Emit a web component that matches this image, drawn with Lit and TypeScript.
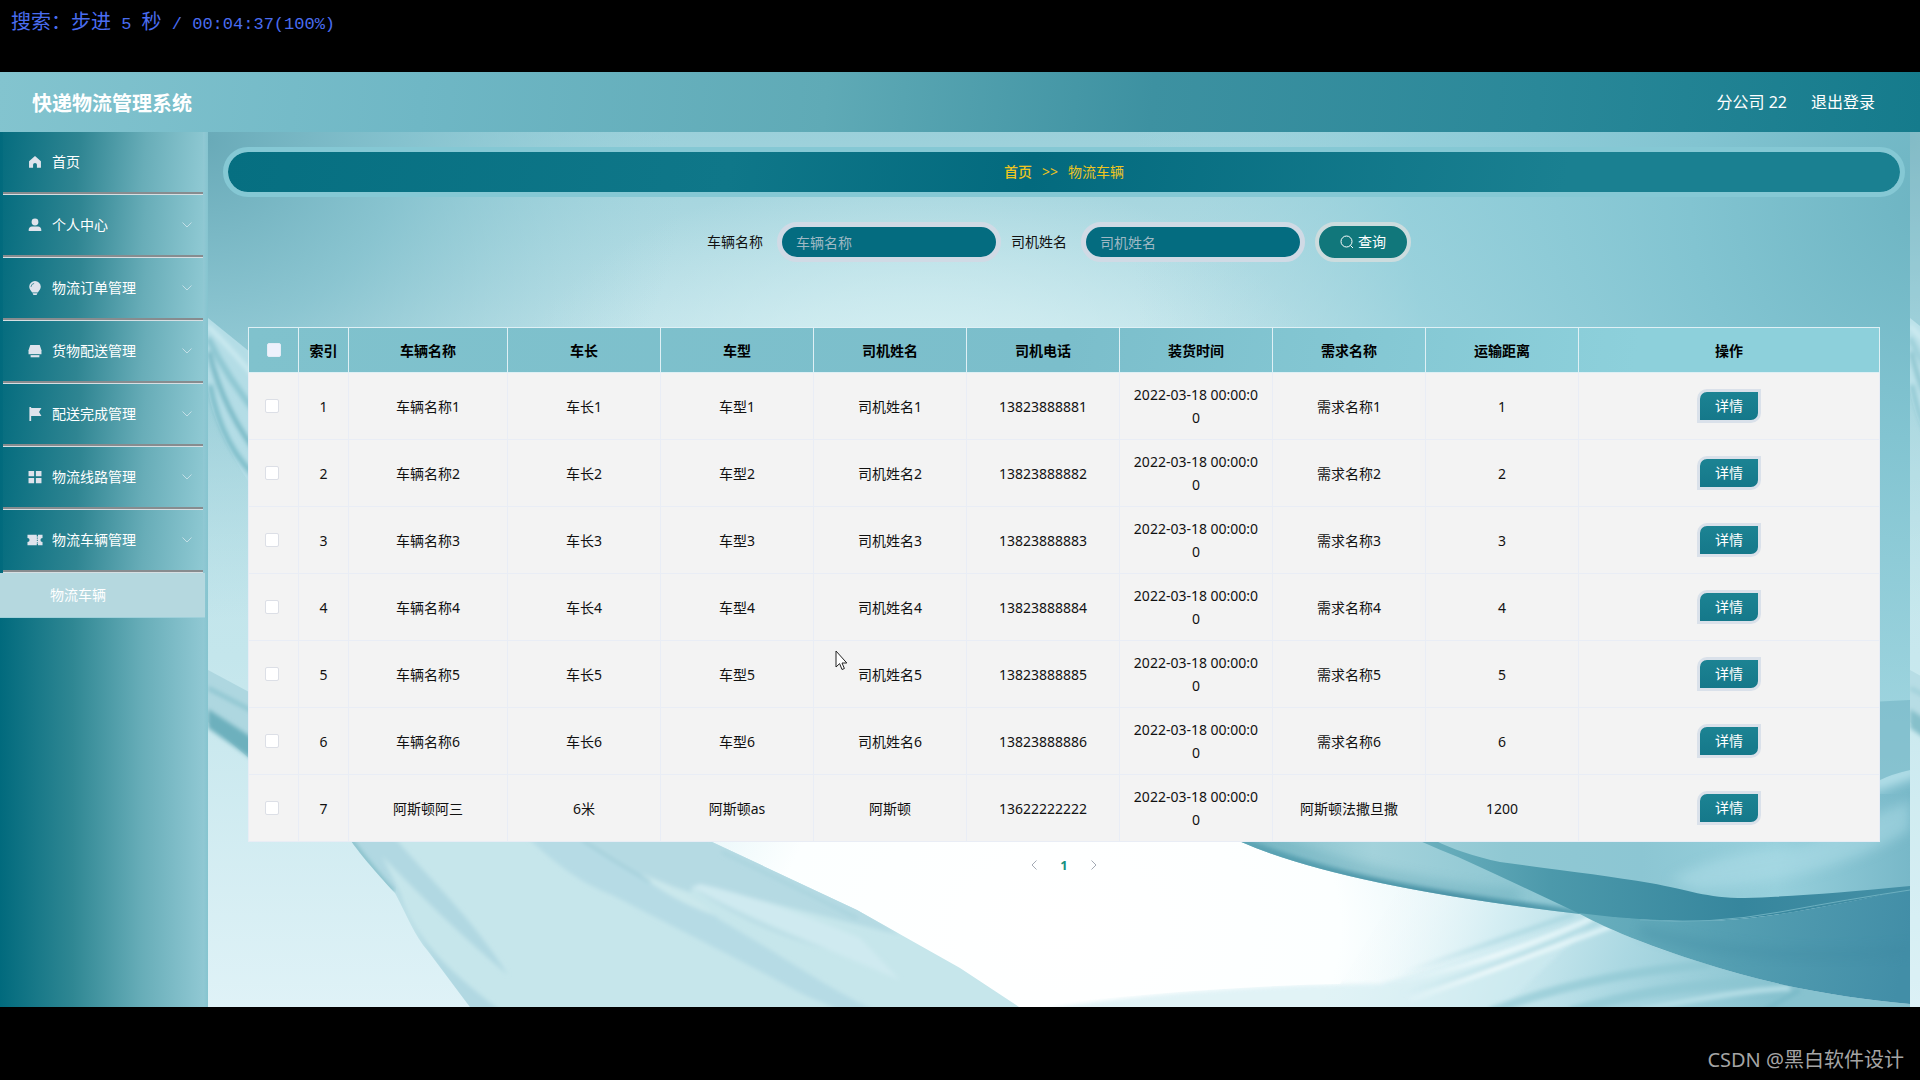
import { LitElement, html, css, svg } from "lit";
import { customElement, property, state } from "lit/decorators.js";

const icons: Record<string, unknown> = {
  home: svg`<path d="M8 1.2 1.2 7v7.6h4.600v-3.400a2.200 2.200 0 0 1 4.400 0v3.400h4.600V7z"/>`,
  user: svg`<circle cx="8" cy="4.600" r="3.900"/><path d="M.8 14.800v-1.400c0-2.400 1.500-3.800 3.800-3.800h6.800c2.300 0 3.800 1.400 3.800 3.800v1.400z"/>`,
  bulb: svg`<path d="M8 0a6.600 6.600 0 0 0-6.600 6.500c0 2.600 1.800 4.300 3.300 6.500h6.600c1.500-2.200 3.300-3.900 3.300-6.500A6.600 6.600 0 0 0 8 0z"/><path d="M5.200 14h5.600l-1 2H6.200z"/><path d="M3.400 6.800A4.400 4.400 0 0 1 7 2.700" fill="none" stroke="#3a8796" stroke-width="1"/>`,
  printer: svg`<path d="M2.600 1h10.800l2 6v4.800H.6V7z"/><path d="M3 12.600h10v2.600H3z"/><path d="M3.400 12.200h9.200" stroke="#2d7f8d" stroke-width=".8"/>`,
  flag: svg`<path d="M1.600 0h2v1.200h11.800l-2.800 4.600 2.800 4.600H3.600v5.600h-2z"/>`,
  grid: svg`<path d="M.6 1h6.400v6H.6zM9 1h6.400v6H9zM.6 9h6.400v6H.6zM9 9h6.400v6H9z"/>`,
  ticket: svg`<path d="M-.6 2h10.600v2h1.400V2h5.200v3.600a2.400 2.400 0 0 0 0 4.800V14h-5.200v-2H10v2H-.6v-3.600a2.400 2.400 0 0 0 0-4.800z"/><path d="M10.700 5v6" stroke="#3a8796" stroke-width="1.200" stroke-dasharray="1.600 1"/>`,
};

@customElement("silk-backdrop")
class SilkBackdrop extends LitElement {
  static styles = css`
    :host { display: block; }
    .art { display: block; width: 100%; height: 100%; }
  `;
  render() {
    return html`<svg class="art" viewBox="208 132 1712 875" preserveAspectRatio="none" aria-hidden="true">
      <defs>
        <linearGradient id="base" x1="0" y1="0" x2="0" y2="1">
          <stop offset="0" stop-color="#9bd0da"/><stop offset=".22" stop-color="#bde1e8"/>
          <stop offset=".6" stop-color="#c4e6ec"/><stop offset="1" stop-color="#dff2f7"/>
        </linearGradient>
        <radialGradient id="glow" gradientUnits="userSpaceOnUse" cx="1060" cy="930" r="560" gradientTransform="translate(0 230) scale(1 .75)">
          <stop offset="0" stop-color="#fff"/><stop offset=".5" stop-color="#fcffff"/><stop offset="1" stop-color="#f0fbfd" stop-opacity="0"/>
        </radialGradient>
        <radialGradient id="mid" gradientUnits="userSpaceOnUse" cx="920" cy="420" r="420" gradientTransform="translate(0 168) scale(1 .6)">
          <stop offset="0" stop-color="#dcf3f5"/><stop offset=".5" stop-color="#d6f0f3" stop-opacity=".6"/><stop offset="1" stop-color="#d0edf1" stop-opacity="0"/>
        </radialGradient>
        <radialGradient id="tl" gradientUnits="userSpaceOnUse" cx="208" cy="140" r="480">
          <stop offset="0" stop-color="#69aab8"/><stop offset=".4" stop-color="#7dbdca" stop-opacity=".75"/><stop offset="1" stop-color="#9ad0da" stop-opacity="0"/>
        </radialGradient>
        <radialGradient id="tr" gradientUnits="userSpaceOnUse" cx="1930" cy="200" r="800">
          <stop offset="0" stop-color="#6db4c2"/><stop offset=".3" stop-color="#82c4d1"/><stop offset=".65" stop-color="#8fcdd9" stop-opacity=".75"/><stop offset="1" stop-color="#a8d8e1" stop-opacity="0"/>
        </radialGradient>
        <linearGradient id="wave" gradientUnits="userSpaceOnUse" x1="1239" y1="0" x2="1910" y2="0">
          <stop offset="0" stop-color="#7fbdc9"/><stop offset=".2" stop-color="#a3d2db"/><stop offset=".4" stop-color="#90c8d3"/><stop offset=".6" stop-color="#8cc6d3"/><stop offset=".8" stop-color="#97d0dc"/><stop offset="1" stop-color="#78b8c8"/>
        </linearGradient>
        <linearGradient id="fold" gradientUnits="userSpaceOnUse" x1="1430" y1="0" x2="1910" y2="0">
          <stop offset="0" stop-color="#6aafbd"/><stop offset=".25" stop-color="#4c99ab"/><stop offset=".65" stop-color="#36869d"/><stop offset="1" stop-color="#4590a6"/>
        </linearGradient>
        <linearGradient id="deep" gradientUnits="userSpaceOnUse" x1="1580" y1="914" x2="1900" y2="980">
          <stop offset="0" stop-color="#69afbe"/><stop offset=".45" stop-color="#559fb2"/><stop offset="1" stop-color="#428ea7"/>
        </linearGradient>
        <linearGradient id="veil" gradientUnits="userSpaceOnUse" x1="1340" y1="900" x2="1760" y2="1040">
          <stop offset="0" stop-color="#fff" stop-opacity="0"/><stop offset=".35" stop-color="#d5eef3"/><stop offset=".65" stop-color="#abd8e2"/><stop offset="1" stop-color="#87c2cf"/>
        </linearGradient>
        <linearGradient id="lip" gradientUnits="userSpaceOnUse" x1="1239" y1="0" x2="1600" y2="0">
          <stop offset="0" stop-color="#5da5b5"/><stop offset=".6" stop-color="#468fa3"/><stop offset="1" stop-color="#5ba4b5"/>
        </linearGradient>
        <linearGradient id="shade" gradientUnits="userSpaceOnUse" x1="1400" y1="0" x2="1600" y2="0">
          <stop offset="0" stop-color="#b0dae3" stop-opacity="0"/><stop offset=".5" stop-color="#b0dae3" stop-opacity=".8"/><stop offset="1" stop-color="#a5d5df"/>
        </linearGradient>
        <linearGradient id="shine" gradientUnits="userSpaceOnUse" x1="1390" y1="0" x2="1600" y2="0">
          <stop offset="0" stop-color="#f4fcfd" stop-opacity="0"/><stop offset=".5" stop-color="#f4fcfd"/><stop offset="1" stop-color="#e4f6f9"/>
        </linearGradient>
        <filter id="soft" x="-20%" y="-50%" width="140%" height="200%"><feGaussianBlur stdDeviation="6"/></filter>
        <filter id="edge" x="-5%" y="-20%" width="110%" height="140%"><feGaussianBlur stdDeviation="2"/></filter>
        <clipPath id="cloth"><path d="M351 841C366 862 385 882 395 893C408 917 414 935 428 951L470 1007H1019L960 968 857 910 710 841z"/></clipPath>
        <clipPath id="swell"><path d="M1239 841 1880 780Q1892 774 1910 770V890L1580 914Q1340 886 1239 841z"/></clipPath>
        <clipPath id="floor"><path d="M1020 1007Q1210 986 1340 984L1400 887 1580 914C1620 936 1680 957 1740 974S1860 999 1910 1004V1007z"/></clipPath>
        <clipPath id="frame"><path d="M208 132h1702v875H208z"/></clipPath>
      </defs>
      <g id="scene" clip-path="url(#frame)">
        <path fill="url(#base)" d="M208 132h1702v875H208z"/>
        <path fill="url(#mid)" d="M400 132h1100v600H400z"/>
        <path fill="url(#tl)" d="M208 132h600v500H208z"/>
        <path fill="url(#tr)" d="M1100 132h810v875h-810z"/>
        <path fill="url(#glow)" d="M400 600h1510v407H400z"/>

        <path fill="#b4dde6" d="M208 318 250 352 320 420V560L250 484Q214 430 208 390z"/>
        <g filter="url(#edge)" fill="none">
          <path stroke="#6fb3c0" stroke-width="4" d="M209 352Q224 414 264 462"/>
          <path stroke="#8cc6d1" stroke-width="6" d="M208 338Q228 380 262 420"/>
          <path stroke="#7bbcc8" stroke-width="5" d="M210 385Q222 450 262 482"/>
          <path stroke="#cdebf1" stroke-width="4" d="M208 326Q232 350 262 386"/>
        </g>
        <path fill="#aed7e0" d="M208 670 260 698V768L208 722z"/>
        <path fill="#6db0bd" filter="url(#edge)" d="M208 709 262 744V766L208 728z"/>
        <path fill="none" stroke="#8dc5d0" stroke-width="4" filter="url(#edge)" d="M208 688 262 716"/>

        <g clip-path="url(#cloth)">
          <path fill="#c6e6eb" d="M340 830h700v180H340z"/>
          <g filter="url(#edge)">
            <path fill="#b6dbe5" d="M528 838C560 868 585 885 612 895C690 935 740 960 780 982S820 1000 838 1010H875C830 990 790 960 720 920 690 890 610 855 580 838z"/>
            <path fill="#b5dae3" d="M580 838C615 862 650 880 690 892L700 886 760 900 900 935 850 900 710 838z"/>
            <path fill="#cfeaf0" d="M700 884Q770 900 860 938L900 980Q780 930 690 888z"/>
            <path fill="#cbe8ec" d="M640 874Q690 890 716 916 670 900 640 874z"/>
            <path fill="#bbdee6" d="M690 886Q760 925 830 950 750 930 690 886z"/>
            <path fill="none" stroke="#98c9d5" stroke-width="2" d="M582 840Q615 862 650 882"/>
            <path fill="#b1d8e2" d="M351 838H395C430 880 470 915 508 975 460 935 420 895 382 856L400 893C410 930 440 965 500 1010H465C430 955 412 930 395 893z"/>
          </g>
          <path fill="none" stroke="#83bdc9" stroke-width="5" filter="url(#edge)" d="M349 838Q372 868 393 892"/>
          <path fill="none" stroke="#a8d3dd" stroke-width="3" filter="url(#edge)" d="M722 852Q790 884 857 918"/>
        </g>

        <g clip-path="url(#floor)">
          <path fill="url(#veil)" d="M1000 880h910v130h-910z"/>
          <path fill="#cfebf1" opacity=".6" filter="url(#edge)" d="M1040 1010Q1200 984 1380 984 1500 950 1600 915L1500 1010z"/>
          <g filter="url(#edge)" fill="none">
            <path stroke="url(#shade)" stroke-width="5" d="M1400 974Q1500 940 1574 914"/>
            <path stroke="url(#shine)" stroke-width="4" d="M1390 984Q1500 960 1592 918"/>
            <path stroke="url(#shade)" stroke-width="3" d="M1400 994Q1500 968 1598 922"/>
            <path stroke="url(#shine)" stroke-width="4" d="M1410 1000Q1530 956 1612 926"/>
            <path stroke="#8ac5d1" stroke-width="9" d="M1490 1012Q1580 976 1710 964" opacity=".6"/>
            <path stroke="#8ac5d1" stroke-width="10" d="M1570 1012Q1660 984 1760 982" opacity=".6"/>
            <path stroke="#b7dfe7" stroke-width="5" d="M1640 1010Q1740 990 1790 988"/>
            <path stroke="#79b9c7" stroke-width="4" d="M1765 1010 1800 990"/>
          </g>
        </g>

        <path fill="#7dbccb" opacity=".8" d="M1870 702l40-2v90h-40z"/>
        <g clip-path="url(#swell)">
          <path fill="url(#wave)" d="M1230 760h680v160h-680z"/>
          <path fill="#b0dee8" opacity=".5" filter="url(#soft)" d="M1670 880Q1720 850 1800 846L1910 800V830Q1830 880 1700 890z"/>
          <path fill="none" stroke="#b9e3ec" stroke-width="14" filter="url(#soft)" d="M1870 785 1920 768"/>
          <path fill="none" stroke="url(#lip)" stroke-width="16" filter="url(#edge)" d="M1225 838C1340 888 1460 902 1600 920"/>
          <path fill="none" stroke="#64a9b8" stroke-width="10" opacity=".5" filter="url(#soft)" d="M1230 826C1340 870 1440 890 1520 896"/>
        </g>
        <path fill="url(#fold)" d="M1420 841H1436C1450 848 1475 857 1500 862C1560 870 1610 876 1650 883S1705 898 1745 898Q1810 896 1910 886V891C1850 900 1770 921 1700 921Q1630 921 1580 914 1500 876 1458 857 1440 850 1420 841z"/>
        <path fill="url(#deep)" d="M1578 913Q1640 921 1700 921C1770 921 1850 900 1910 890V1004C1860 999 1800 991 1740 974S1620 936 1578 913z"/>
        <path fill="none" stroke="#6db0c0" stroke-width="1" d="M1640 920Q1710 925 1780 912T1910 890"/>
        <path fill="none" stroke="#3c869f" stroke-width="10" opacity=".3" filter="url(#soft)" d="M1640 930Q1750 965 1910 950"/>
      </g>
      <use href="#scene" x="1702"/>
      <path fill="#d5f0f5" opacity=".25" d="M1910 132h10v875h-10z"/>
    </svg>`;
  }
}

@customElement("side-menu")
class SideMenu extends LitElement {
  static styles = css`
    :host {
      display: block;
      background: linear-gradient(90deg, #016a7d 0%, #2f8793 35%, #67adb8 68%, #90c8d3 98%, #85c4cf 100%);
    }
    .list { list-style: none; margin: 0; padding: 0; }
    .row { margin: 0 5px 0 3px; }
    .item {
      display: flex; align-items: center; width: 100%; height: 63px; box-sizing: border-box;
      padding: 0 11px 0 24px; border: 0; border-bottom: 3px groove #d6dfe3;
      background: linear-gradient(95deg, #066d7f 0%, #2f8592 38%, #68adb8 70%, #8fc9d3 100%);
      color: #fff; font: inherit; font-size: 14px; text-align: left; text-decoration: none; cursor: pointer;
    }
    .icon { width: 16px; height: 14px; fill: #dfe3ec; margin-right: 9px; overflow: visible; }
    .name { flex: 1; }
    .chev { width: 10px; height: 6px; fill: none; stroke: #c3dfe6; stroke-width: 1; overflow: visible; }
    .sub {
      display: flex; align-items: center; height: 45px; margin-right: 3px; padding-left: 50px;
      background: #b5d8df; border-bottom: 1px solid #9fd0da; color: #fff; font-size: 14px; text-decoration: none;
      box-sizing: border-box;
    }
  `;
  private entries = [
    ["home", "首页"], ["user", "个人中心"], ["bulb", "物流订单管理"], ["printer", "货物配送管理"],
    ["flag", "配送完成管理"], ["grid", "物流线路管理"], ["ticket", "物流车辆管理"],
  ];
  render() {
    return html`<nav><ul class="list">
      ${this.entries.map(([icon, name], i) => {
        const body = html`<svg class="icon" viewBox="0 0 16 16" aria-hidden="true">${icons[icon]}</svg><span class="name">${name}</span>`;
        return html`<li class="row">${i === 0
          ? html`<a class="item" href="#home">${body}</a>`
          : html`<button class="item" type="button">${body}<svg class="chev" viewBox="0 0 10 6" aria-hidden="true"><path d="M.5.5 5 5l4.500-4.500"/></svg></button>`}</li>`;
      })}
      <li><a class="sub" href="#vehicles">物流车辆</a></li>
    </ul></nav>`;
  }
}

interface Vehicle { name: string; length: string; type: string; driver: string; phone: string; need: string; distance: string; }

@customElement("vehicle-table")
class VehicleTable extends LitElement {
  @property({ attribute: false }) rows: Vehicle[] = [];
  static styles = css`
    :host { display: block; }
    .table { width: 100%; table-layout: fixed; border-collapse: collapse; font-size: 14px; line-height: 23px; color: #111; }
    .c-check { width: 50px; } .c-index { width: 50px; } .c-name { width: 159px; } .c-text { width: 153px; } .c-last { width: auto; }
    .head { background: linear-gradient(100deg, #80c2cd 0%, #7bbecb 50%, #8dd0db 85%); }
    .th { height: 45px; box-sizing: border-box; padding: 0; border: 1px solid #dff0f5; color: #000; font-weight: 700; text-align: center; }
    .td { height: 67px; box-sizing: border-box; padding: 0 12px; border: 1px solid #e9edf5; text-align: center; word-break: break-all; }
    .row { background: #f3f3f3; }
    .pick { padding: 0 3px 0 0; }
    .box { appearance: none; box-sizing: border-box; display: block; width: 14px; height: 14px; margin: 0 auto; border: 1px solid #dcdfe6; border-radius: 2px; background: #fff; }
    .th .box { background: #eef1fc; border-color: #e4ecf6; }
    .box:checked { background: #1a8192; }
    .more {
      width: 64px; height: 34px; padding: 0; border: 3px solid #dae1ea; border-radius: 10px 0 10px 0;
      background: linear-gradient(#1c8393, #15788a); color: #fff; font: inherit; font-size: 14px; line-height: 20px; cursor: pointer;
      display: block; margin: 0 auto;
    }
  `;
  render() {
    const heads = ["索引", "车辆名称", "车长", "车型", "司机姓名", "司机电话", "装货时间", "需求名称", "运输距离", "操作"];
    return html`<table class="table">
      <colgroup>
        <col class="c-check"><col class="c-index"><col class="c-name">
        ${[0, 1, 2, 3, 4, 5, 6].map(() => html`<col class="c-text">`)}<col class="c-last">
      </colgroup>
      <thead><tr class="head">
        <th class="th"><input class="box" type="checkbox" aria-label="全选"></th>
        ${heads.map((h) => html`<th class="th" scope="col">${h}</th>`)}
      </tr></thead>
      <tbody>${this.rows.map((r, i) => html`<tr class="row">
        <td class="td pick"><input class="box" type="checkbox" aria-label=${r.name}></td>
        <td class="td">${i + 1}</td><td class="td">${r.name}</td><td class="td">${r.length}</td>
        <td class="td">${r.type}</td><td class="td">${r.driver}</td><td class="td">${r.phone}</td>
        <td class="td">2022-03-18 00:00:00</td><td class="td">${r.need}</td><td class="td">${r.distance}</td>
        <td class="td"><button class="more" type="button">详情</button></td>
      </tr>`)}</tbody>
    </table>`;
  }
}

@customElement("app-root")
class AppRoot extends LitElement {
  @state() private rows: Vehicle[] = [
    ...[1, 2, 3, 4, 5, 6].map((n) => ({
      name: `车辆名称${n}`, length: `车长${n}`, type: `车型${n}`, driver: `司机姓名${n}`,
      phone: `1382388888${n}`, need: `需求名称${n}`, distance: `${n}`,
    })),
    { name: "阿斯顿阿三", length: "6米", type: "阿斯顿as", driver: "阿斯顿", phone: "13622222222", need: "阿斯顿法撒旦撒", distance: "1200" },
  ];
  static styles = css`
    :host {
      display: flex; flex-direction: column; min-height: 100vh; background: #000; position: relative;
      font-family: "Noto Sans", "Noto Sans CJK SC", sans-serif; font-size: 14px; line-height: 20px;
    }
    .osd { height: 72px; box-sizing: border-box; padding: 12px 0 0 11px; color: #4a6df0; font-family: "Liberation Mono", "Noto Sans CJK SC", monospace; font-size: 20px; line-height: 24px; white-space: pre; }
    .half { font-size: 17px; }
    .header {
      display: flex; align-items: center; height: 60px; padding: 0 45px 0 32px; color: #fff;
      background: linear-gradient(95deg, #83c4cf 0%, #6fb7c5 22%, #5faab6 43%, #3d91a1 60%, #2a8899 80%, #157b8c 100%);
    }
    .brand { flex: 1; margin: 0; padding-top: 3px; font-size: 20px; line-height: 28px; font-weight: 700; }
    .who { font-size: 16px; }
    .quit { margin-left: 24px; font-size: 16px; color: #fff; text-decoration: none; }
    .body { display: flex; flex: 1; }
    .side { width: 208px; flex: none; }
    .main { position: relative; flex: 1; min-width: 0; }
    .backdrop { position: absolute; inset: 0; }
    .content { position: relative; padding: 15px; }
    .crumbs {
      display: flex; align-items: center; justify-content: center; gap: 10px; height: 40px; border: 5px solid #85c8d4; border-radius: 30px;
      background: linear-gradient(100deg, #066f81 0%, #0f7789 30%, #036a7e 48%, #1a8091 80%, #1a8091 100%) padding-box; color: #efc51f;
    }
    .crumb { color: inherit; text-decoration: none; font-weight: 500; }
    .search { display: flex; justify-content: center; align-items: center; margin: 25px 10px 0 0; }
    .label { color: #111; margin-right: 14px; }
    .field {
      width: 224px; height: 40px; box-sizing: border-box; margin-right: 10px; padding: 0 14px; border: 5px solid #d0dae5; border-radius: 20px;
      background: #046c80; color: #fff; font: inherit; font-size: 14px;
    }
    .field::placeholder { color: #9fb9c4; opacity: 1; }
    .go {
      display: flex; align-items: center; justify-content: center; gap: 4px; width: 96px; height: 40px; border: 4px solid #ccdcde; border-radius: 20px;
      background: #11777b; color: #fff; font: inherit; font-size: 14px; cursor: pointer;
    }
    .lens { width: 14px; height: 14px; fill: none; stroke: #fff; stroke-width: 1; }
    .grid { margin: 65px 25px 0; }
    .pager { display: flex; justify-content: center; margin-top: 9px; }
    .page { display: flex; align-items: center; justify-content: center; width: 30px; height: 28px; padding: 0; border: 0; background: none; font: inherit; font-size: 13px; color: #18907f; font-weight: 700; }
    .arrow { width: 6px; height: 10px; fill: none; stroke: #a3aab4; stroke-width: 1; }
    .foot { display: flex; align-items: center; justify-content: flex-end; height: 73px; box-sizing: border-box; padding: 33px 16px 0 0; color: #a5a5a5; font-size: 20px; }
    .cursor { position: absolute; left: 835px; top: 650px; width: 13px; height: 21px; }
  `;
  render() {
    return html`
      <div class="osd">搜索：步进<span class="half"> 5 </span>秒<span class="half"> / 00:04:37(100%)</span></div>
      <header class="header">
        <h1 class="brand">快递物流管理系统</h1>
        <span class="who">分公司 22</span>
        <a class="quit" href="#logout">退出登录</a>
      </header>
      <div class="body">
        <side-menu class="side"></side-menu>
        <main class="main">
          <silk-backdrop class="backdrop"></silk-backdrop>
          <div class="content">
            <div class="crumbs"><a class="crumb" href="#home">首页</a><span>&gt;&gt;</span><span>物流车辆</span></div>
            <form class="search" @submit=${(e: Event) => e.preventDefault()}>
              <label class="label" for="vehicle">车辆名称</label>
              <input class="field" id="vehicle" type="text" placeholder="车辆名称">
              <label class="label" for="driver">司机姓名</label>
              <input class="field" id="driver" type="text" placeholder="司机姓名">
              <button class="go" type="submit"><svg class="lens" viewBox="0 0 14 14" aria-hidden="true"><circle cx="6.500" cy="6.500" r="5.500"/><path d="m10.500 10.500 2.500 2.500"/></svg>查询</button>
            </form>
            <vehicle-table class="grid" .rows=${this.rows}></vehicle-table>
            <div class="pager">
              <button class="page" type="button" aria-label="上一页"><svg class="arrow" viewBox="0 0 6 10" aria-hidden="true"><path d="M5.500.5 1 5l4.500 4.500"/></svg></button>
              <button class="page" type="button">1</button>
              <button class="page" type="button" aria-label="下一页"><svg class="arrow" viewBox="0 0 6 10" aria-hidden="true"><path d="M.5.5 5 5 .5 9.500"/></svg></button>
            </div>
          </div>
        </main>
      </div>
      <footer class="foot">CSDN @黑白软件设计</footer>
      <svg class="cursor" viewBox="0 0 13 21" aria-hidden="true"><path d="M1 1v16l3.600-3.400L7 19.500l2.400-1L7 13h4.800z" fill="#fff" stroke="#222" stroke-width="1"/></svg>
    `;
  }
}
